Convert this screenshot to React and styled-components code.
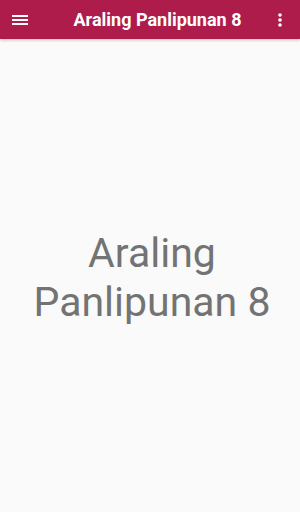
import React from "react";
import styled, { createGlobalStyle } from "styled-components";

const Global = createGlobalStyle`
  html, body { margin: 0; padding: 0; background: #fafafa; }
  body { font-family: Roboto, "Liberation Sans", sans-serif; }
`;

const Screen = styled.div`
  width: 300px;
  height: 512px;
  display: flex;
  flex-direction: column;
  background: #fafafa;
`;

const Toolbar = styled.div`
  height: 39px;
  flex-shrink: 0;
  background: #ad1c4b;
  display: flex;
  align-items: center;
  padding: 0 17px 0 12px;
  box-shadow: 0 1px 3px rgba(0, 0, 0, 0.25);
  color: #fff;
`;

const IconButton = styled.div`
  width: ${(p) => p.w || 16}px;
  display: flex;
  align-items: center;
  justify-content: center;
`;

const Title = styled.div`
  flex: 1;
  text-align: center;
  font-size: 18px;
  font-weight: 700;
  padding-left: 10px;
`;

const Body = styled.div`
  flex: 1;
  display: flex;
  align-items: center;
  justify-content: center;
  padding-top: 4px;
`;

const BigText = styled.div`
  font-size: 41px;
  line-height: 49px;
  color: #737373;
  text-align: center;
  margin-left: 4px;
`;

export default function App() {
  return (
    <Screen>
      <Global />
      <Toolbar>
        <IconButton w={16}>
          <svg width="16" height="10" viewBox="0 0 16 10">
            <rect x="0" y="0" width="16" height="2" fill="#fff" />
            <rect x="0" y="4" width="16" height="2" fill="#fff" />
            <rect x="0" y="8" width="16" height="2" fill="#fff" />
          </svg>
        </IconButton>
        <Title>Araling Panlipunan 8</Title>
        <IconButton w={6}>
          <svg width="4" height="14" viewBox="0 0 4 14">
            <circle cx="2" cy="2" r="1.8" fill="#fff" />
            <circle cx="2" cy="7" r="1.8" fill="#fff" />
            <circle cx="2" cy="12" r="1.8" fill="#fff" />
          </svg>
        </IconButton>
      </Toolbar>
      <Body>
        <BigText>
          Araling
          <br />
          Panlipunan 8
        </BigText>
      </Body>
    </Screen>
  );
}
